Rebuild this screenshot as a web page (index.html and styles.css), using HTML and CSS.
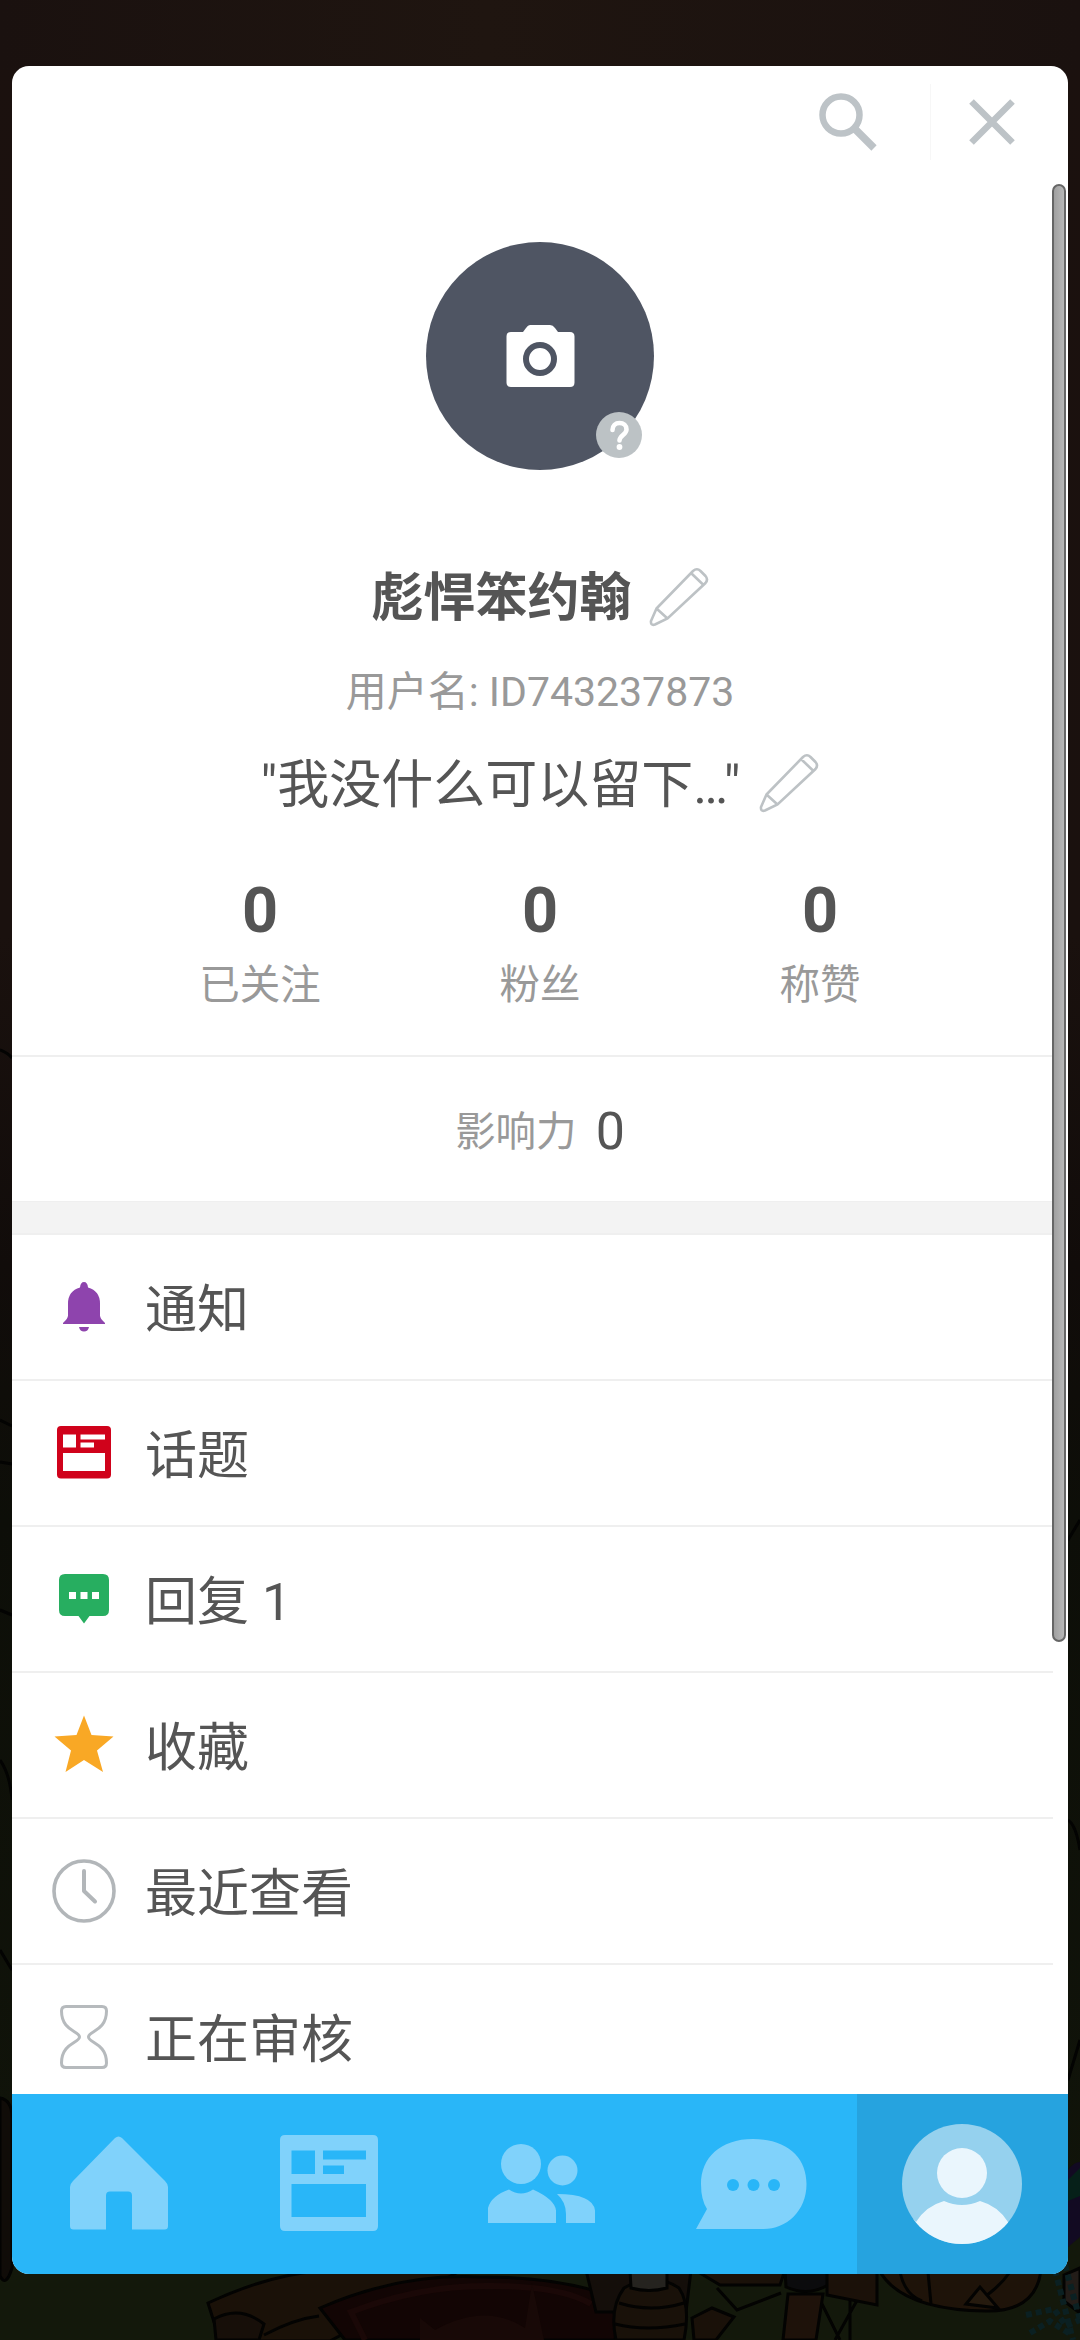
FILE: index.html
```html
<!DOCTYPE html>
<html lang="zh-CN">
<head>
<meta charset="utf-8">
<title>个人资料</title>
<link rel="stylesheet" href="styles.css">
</head>
<body>
<svg class="scene" viewBox="0 0 1080 2340" aria-hidden="true">
  <defs>
    <linearGradient id="sky" x1="0" y1="0" x2="0" y2="1">
      <stop offset="0" stop-color="#1b110e"/><stop offset=".4" stop-color="#1a110e"/>
      <stop offset=".54" stop-color="#110c0a"/><stop offset=".65" stop-color="#0d0e08"/><stop offset="1" stop-color="#11150a"/>
    </linearGradient>
    <linearGradient id="glow"><stop offset="0" stop-color="#1a110f"/><stop offset=".45" stop-color="#1f1510"/><stop offset="1" stop-color="#1a110f"/></linearGradient>
  </defs>
  <rect width="1080" height="2340" fill="url(#sky)"/>
  <rect width="1080" height="70" fill="url(#glow)"/>
  <rect y="2200" width="1080" height="140" fill="#13180b"/>
  <g stroke="#030302" stroke-width="3" fill="none">
    <path d="M0 1050q8 3 12 8M0 1420l12 6M0 1462l12 2M0 1610l12 5M0 1760q10 14 12 40M0 1950l12 20M1068 1540l12-20M1068 1820q8 5 12 30M1068 2080l12-40"/>
    <path fill="#100c08" d="M0 2098q12 2 12 20v150q-6 20-12 8z"/>
    <path fill="#1a1108" d="M208 2303q60-28 112-32h140l-130 70h-110z"/>
    <path fill="#170f09" d="M214 2319q26-14 50 5l-5 16h-43z"/>
    <path d="M264 2335q30-16 55-19"/>
    <path fill="#120504" d="M320 2308q80-35 160-31 80-1 140 22l-5 41H345z"/>
    <path stroke="#1a0807" stroke-width="6" d="M365 2340l-14-28q70-27 140-26 70 0 100 18"/>
    <path fill="#180907" stroke="none" d="M420 2340v-22l15 12q50-28 90-2l7-45 12 57z"/>
    <path fill="#140e0a" d="M586 2270h105l-5 42h-90z"/>
    <path fill="#191109" d="M616 2340q-7-32 8-52 30-17 55 0 12 18 5 52z"/>
    <path d="M619 2303q32 10 65 0M615 2324q32 8 70 0"/>
    <path fill="#25231f" d="M630 2270h37v18q-18 5-36 0z"/>
    <path fill="#1a1109" d="M695 2270h90l-5 15-60 0zM692 2318l20-10 22 9-18 23h-22z"/>
    <path d="M717 2288l20 22 44-17M820 2300l20 40M860 2295l-25 45M850 2300v40"/>
    <path fill="#0b0b0d" d="M785 2270h43v15q-20 12-42 2z"/>
    <path fill="#1e120a" d="M788 2294h35l-7 46h-33z"/>
    <path fill="#1b1109" d="M827 2270h50v35l-50-10z"/>
    <path fill="#1e1309" d="M879 2270h162q-5 42-55 41-85-1-107-41z"/>
    <path d="M900 2272q5 23 22 29M928 2272l3 32M1010 2272q-12 17-33 30"/>
    <path fill="#251a0e" d="M966 2304l14-17 18 21z"/>
    <path fill="#221c18" d="M1064 2275l16-7v45l-16-12z"/>
  </g>
  <path d="M1055 2270l18 70M1065 2265l15 55M1026 2315l28-6 12 17 14-6M1030 2333l20-12 20 13" stroke="#0b2022" stroke-width="6" stroke-dasharray="6 4" fill="none"/>
  <path d="M1068 2170q6-8 12-8v75l-12 10z" fill="#120a22"/><path d="M1068 2180l12-12v28l-12 5z" fill="#062019"/>
</svg>

<main class="sheet">
  <header class="topbar">
    <button class="tool search" aria-label="搜索">
      <svg width="60" height="60" viewBox="818 91 60 60" fill="none" stroke="#bdc3c7"><circle cx="841" cy="115" r="18.500" stroke-width="6.500"/><path d="M855 129l19 19" stroke-width="7.500"/></svg>
    </button>
    <span class="split"></span>
    <button class="tool" aria-label="关闭">
      <svg width="50" height="50" viewBox="967 97 50 50" fill="none" stroke="#bdc3c7" stroke-width="6.500"><path d="M971.500 101.500l41 41M1012.500 101.500l-41 41"/></svg>
    </button>
  </header>

  <section class="profile">
    <div class="avatar">
      <svg width="70" height="64" viewBox="505 324 70 64"><path fill="#fff" d="M530 325h20q3 0 5 3l3 4h12q4.500 0 4.500 4.500v46q0 4.500-4.500 4.500h-59q-4.500 0-4.500-4.500v-46q0-4.500 4.500-4.500h12l3-4q2-3 4-3z"/><circle cx="540" cy="359" r="14" fill="none" stroke="#4f5563" stroke-width="6"/></svg>
      <span class="help"><svg width="46" height="46" viewBox="0 0 46 46"><path d="M16.500 18c0-4.500 3-7 7-7s7 2.500 7 6.500c0 5-7 6-7 11" fill="none" stroke="#fff" stroke-width="4.600" stroke-linecap="round"/><circle cx="23.500" cy="35" r="2.900" fill="#fff"/></svg></span>
    </div>
    <div class="line name"><b>彪悍笨约翰</b>
      <svg class="pencil" viewBox="0 0 60 60"><path d="M7.500 41.500L44 4q4-3.500 7.500 0l5 5q3 3.500 0 7L18.500 51.500 6 57.500q-4.500 1.500-4-3.500zM7.500 41.500l11 10M42 6l12.500 12"/></svg>
    </div>
    <div class="line user"><span>用户名: ID743237873</span></div>
    <div class="line bio"><span>"我没什么可以留下…"</span>
      <svg class="pencil" viewBox="0 0 60 60"><path d="M7.500 41.500L44 4q4-3.500 7.500 0l5 5q3 3.500 0 7L18.500 51.500 6 57.500q-4.500 1.500-4-3.500zM7.500 41.500l11 10M42 6l12.500 12"/></svg>
    </div>
    <div class="stats">
      <div class="stat"><b>0</b><span>已关注</span></div>
      <div class="stat"><b>0</b><span>粉丝</span></div>
      <div class="stat"><b>0</b><span>称赞</span></div>
    </div>
  </section>

  <div class="influence"><span class="muted">影响力</span><span class="score">0</span></div>
  <div class="band"></div>

  <ul class="menu">
    <li><svg class="ico" viewBox="50 1273 68 68" fill="#8e44ad"><path d="M84 1282q3.500 0 4 5.500 12 3.500 12 16v12q0 3 5 7.500v1H63v-1q5-4.500 5-7.500v-12q0-12.500 12-16 .5-5.500 4-5.500zM79 1327h10q-1 4.500-5 4.500t-5-4.500z"/></svg><span>通知</span></li>
    <li><svg class="ico" viewBox="50 1419 68 68"><path fill="#d0021b" fill-rule="evenodd" d="M61 1426h46q4 0 4 4v44.500q0 4-4 4H61q-4 0-4-4V1430q0-4 4-4zm2 8.500v13h13v-13zm17.500 0v5H105v-5zm0 8v5H94v-5zM63 1453v18h42v-18z"/></svg><span>话题</span></li>
    <li><svg class="ico" viewBox="50 1565 68 68"><path fill="#27ae60" d="M65 1574h38q6 0 6 6v30q0 6-6 6H89.500l-5.500 7.500-5.500-7.500H65q-6 0-6-6v-30q0-6 6-6z"/><path fill="#fff" d="M69 1592h7v7h-7zM80.500 1592h7v7h-7zM92 1592h7v7h-7z"/></svg><span>回复 1</span></li>
    <li><svg class="ico" viewBox="50 1711 68 68"><path fill="#f9a825" d="M84 1715.500l7.500 19.500 22 1.500-16.500 14 6 21.500-19-12-18.500 12 5.500-21.500-16.500-14 22-1.500z"/></svg><span>收藏</span></li>
    <li><svg class="ico" viewBox="50 1857 68 68" fill="none" stroke="#b2b6b9" stroke-linecap="round" stroke-linejoin="round"><circle cx="84" cy="1891" r="30" stroke-width="3.600"/><path stroke-width="4" d="M84 1871v20l11 10.500"/></svg><span>最近查看</span></li>
    <li><svg class="ico" viewBox="50 2003 68 68" fill="none" stroke="#b6babd" stroke-width="3"><path d="M66 2006.500h36q4.500 0 4.500 4.500c0 20-18 20-18 26s18 6 18 26q0 4.500-4.500 4.500H66q-4.500 0-4.500-4.500c0-20 18-20 18-26s-18-6-18-26q0-4.500 4.500-4.500z"/></svg><span>正在审核</span></li>
  </ul>

  <nav class="tabs">
    <a class="tab"><svg width="110" height="120" viewBox="63 2124 110 120"><path fill="#80d2fb" d="M115 2138q3.500-3 7 0l43 43q3 3 3 6v39q0 3.500-3.500 3.500H132v-34q0-4-4-4h-18q-4 0-4 4v34H73.500q-3.500 0-3.500-3.500v-39q0-3 3-6z"/></svg></a>
    <a class="tab"><svg width="110" height="120" viewBox="275 2124 110 120"><path fill="#80d2fb" fill-rule="evenodd" d="M286 2135h88q5 0 5 5v86q0 5-5 5h-88q-5 0-5-5v-86q0-5 5-5zm6.500 15.500V2174H316v-23.500zm31.500 0v9h43v-9zm0 15v8.500h21v-8.500zm-31.500 18.500v33H367v-33z"/></svg></a>
    <a class="tab"><svg width="110" height="120" viewBox="485 2124 110 120" fill="#80d2fb"><circle cx="521" cy="2164" r="20"/><circle cx="562.500" cy="2170.500" r="15"/><path d="M488 2223v-15q3-12 21-18.500 12 8 24 0 22 10 23 21v12.500zM557 2194q36 0 38 16.500v12.500h-29v-9q0-12-9-20z"/></svg></a>
    <a class="tab"><svg width="120" height="120" viewBox="690 2124 120 120"><path fill="#80d2fb" d="M752 2139c35 0 53.500 19 53.500 45 0 27-20 45-43 45H695l11-20q-6-9-6-25c0-26 19-45 52-45z"/><g fill="#29b6f8"><circle cx="732" cy="2185" r="6"/><circle cx="752.500" cy="2185" r="6"/><circle cx="773" cy="2185" r="6"/></g></svg></a>
    <a class="tab active"><svg width="120" height="120" viewBox="-60 -60 120 120"><clipPath id="disc"><circle r="60"/></clipPath><circle r="60" fill="#95d1ee"/><g fill="#eaf6fd" clip-path="url(#disc)"><circle cy="-11" r="25"/><path d="M-60 60q5-34 14-22Q-36 22-18 17q18 8 36 0 18 5 28 21v30z"/></g></svg></a>
  </nav>
  <div class="scrollbar"></div>
</main>
</body>
</html>
```
FILE: styles.css
```css
* { box-sizing: border-box; }
body {
  margin: 0;
  width: 1080px;
  height: 2340px;
  overflow: hidden;
  background: #15100b;
  color: #555;
  font-family: Roboto, "Noto Sans CJK SC", sans-serif;
}
svg { display: block; flex: none; }
.scene { position: absolute; left: 0; top: 0; width: 1080px; height: 2340px; }
.sheet {
  position: relative;
  display: flex;
  flex-direction: column;
  width: 1056px;
  height: 2208px;
  margin: 66px auto 0;
  background: #fff;
  border-radius: 17px;
  overflow: hidden;
}
.topbar {
  display: flex;
  flex: none;
  align-items: center;
  justify-content: flex-end;
  height: 112px;
  padding-right: 51px;
}
.tool { padding: 0; border: 0; background: none; }
.search { margin-right: 52px; padding-bottom: 2px; }
.split { width: 1px; height: 76px; margin-right: 36px; background: #f7f7f7; }

.profile {
  display: flex;
  flex: none;
  flex-direction: column;
  align-items: center;
  height: 877px;
  padding-top: 64px;
}
.avatar {
  position: relative;
  display: flex;
  align-items: center;
  justify-content: center;
  width: 228px;
  height: 228px;
  margin-bottom: 93px;
  border-radius: 50%;
  background: #4f5563;
}
.help {
  position: absolute;
  right: 12px;
  bottom: 12px;
  width: 46px;
  height: 46px;
  border-radius: 50%;
  background: #bcc2c5;
}
.line { display: flex; align-items: center; justify-content: center; }
.name { height: 68px; gap: 17px; font-size: 52px; }
.name b { padding-bottom: 7px; }
.user { height: 56px; margin: 29px 0 33px; font-size: 41px; color: #999; }
.bio { height: 68px; gap: 19px; font-size: 52px; }
.bio span { padding-bottom: 6px; }
.pencil { width: 60px; height: 60px; fill: none; stroke: #bdc2c5; stroke-width: 2.6; }
.stats { display: grid; grid-template-columns: repeat(3, 280px); margin-top: 55px; }
.stat { display: flex; flex-direction: column; align-items: center; }
.stat b { font-size: 63px; line-height: 78px; }
.stat span { font-size: 40.5px; line-height: 56px; margin-top: 7px; color: #999; }

.influence {
  display: flex;
  flex: none;
  align-items: center;
  justify-content: center;
  gap: 19px;
  height: 146px;
  width: 1041px;
  padding-left: 15px;
  border-top: 2px solid #efefef;
}
.muted { padding-bottom: 2px; font-size: 40.5px; color: #999; }
.score { padding-top: 4px; font-size: 52px; }
.band { flex: none; width: 1041px; height: 34px; background: #f3f3f3; border-bottom: 2px solid #efefef; border-top: 1px solid #efefef; }

.menu { flex: 1; min-height: 0; width: 1041px; margin: 0; padding: 0; overflow: hidden; list-style: none; }
.menu li {
  display: flex;
  align-items: center;
  gap: 27px;
  height: 146px;
  padding-left: 38px;
  border-bottom: 2px solid #efefef;
  font-size: 52px;
}
.menu span { padding-bottom: 4px; }
.ico { width: 68px; height: 68px; }

.tabs { display: grid; flex: none; grid-template-columns: repeat(5, 1fr); height: 180px; background: #29b6f8; }
.tab { display: flex; align-items: center; justify-content: center; }
.active { background: #26a3df; }

.scrollbar {
  position: absolute;
  right: 2px;
  top: 118px;
  width: 14px;
  height: 1458px;
  border: 2px solid #666;
  border-radius: 7px;
  background: linear-gradient(90deg, #a0a0a0, #b8b8b8);
}
```
